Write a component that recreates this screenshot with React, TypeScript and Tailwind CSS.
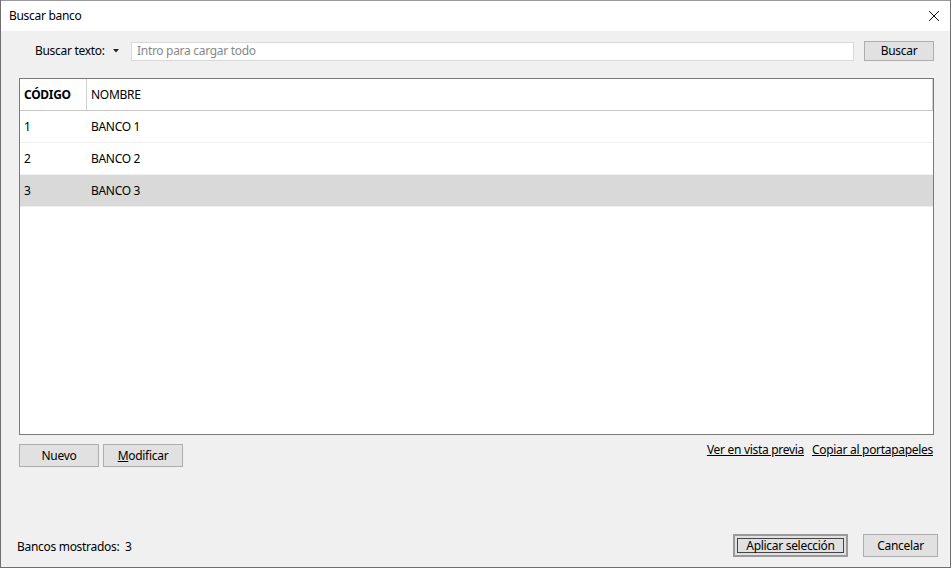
const rows = [
  { code: "1", name: "BANCO 1" },
  { code: "2", name: "BANCO 2" },
  { code: "3", name: "BANCO 3", selected: true },
];

function Button({
  label,
  className = "",
}: {
  label: React.ReactNode;
  className?: string;
}) {
  return (
    <button
      className={
        "flex items-center justify-center border border-[#adadad] bg-[#e1e1e1] text-[12px] text-black " +
        className
      }
    >
      {label}
    </button>
  );
}

export default function App() {
  return (
    <div
      className="flex h-[568px] w-[951px] flex-col border-x border-b border-[#6e6e6e] bg-[#f0f0f0] text-[12px] tracking-[-0.3px] text-black"
      style={{ fontFamily: '"Noto Sans", "Open Sans", sans-serif' }}
    >
      <div className="flex h-[31px] shrink-0 items-center justify-between border-t border-[#9a9a9a] bg-white pl-[8px] pr-[8px]">
        <span className="text-[12px]">Buscar banco</span>
        <svg width="12" height="12" viewBox="0 0 12 12" className="mr-[2px]">
          <path d="M1 1 L11 11 M11 1 L1 11" stroke="#111" strokeWidth="1" />
        </svg>
      </div>

      <div className="flex flex-1 flex-col px-[18px]">
        <div className="mt-[10px] flex h-[20px] items-center">
          <span className="ml-[16px] w-[74px] shrink-0 whitespace-nowrap">
            Buscar texto:
          </span>
          <svg width="6" height="4" viewBox="0 0 6 4" className="ml-[4px] shrink-0">
            <path d="M0 0 H6 L3 3.5 Z" fill="#222" />
          </svg>
          <div className="ml-[12px] flex h-[19px] w-[723px] shrink-0 items-center border border-[#d9d9d9] bg-white pl-[5px] text-[#888]">
            Intro para cargar todo
          </div>
          <Button label="Buscar" className="ml-[10px] h-[20px] w-[70px] shrink-0" />
        </div>

        <div className="mt-[17px] flex h-[357px] w-[915px] flex-col border border-[#7a7a7a] bg-white">
          <div className="flex h-[32px] shrink-0 border-b border-[#c8c8c8]">
            <div className="flex w-[67px] items-center border-r border-[#d0d0d0] pl-[4px] font-bold">
              CÓDIGO
            </div>
            <div className="flex flex-1 items-center border-r border-[#d0d0d0] pl-[4px]">
              NOMBRE
            </div>
          </div>
          {rows.map((row) => (
            <div
              key={row.code}
              className={
                "flex h-[32px] shrink-0 items-center border-b border-[#f0f0f0] " +
                (row.selected ? "bg-[#d9d9d9]" : "")
              }
            >
              <div className="w-[67px] pl-[4px]">{row.code}</div>
              <div className="pl-[4px]">{row.name}</div>
            </div>
          ))}
        </div>

        <div className="mt-[9px] flex items-start justify-between">
          <div className="flex gap-[4px]">
            <Button label="Nuevo" className="h-[23px] w-[80px]" />
            <Button
              label={
                <span>
                  <span className="underline">M</span>odificar
                </span>
              }
              className="h-[23px] w-[80px]"
            />
          </div>
          <div className="mr-[-1px] mt-[-3px] flex gap-[8px] underline">
            <span>Ver en vista previa</span>
            <span>Copiar al portapapeles</span>
          </div>
        </div>

        <div className="mt-auto mb-[10px] flex items-center justify-between">
          <span className="ml-[-2px] mt-[3px]">Bancos mostrados:&nbsp; 3</span>
          <div className="mr-[-6px] flex gap-[15px]">
            <button className="flex h-[23px] w-[115px] items-center justify-center border-2 border-[#9a9a9a] bg-[#e1e1e1] p-[2px]">
              <span className="flex h-full w-full items-center justify-center border border-[#444]">
                Aplicar selección
              </span>
            </button>
            <Button label="Cancelar" className="h-[23px] w-[75px]" />
          </div>
        </div>
      </div>
    </div>
  );
}
